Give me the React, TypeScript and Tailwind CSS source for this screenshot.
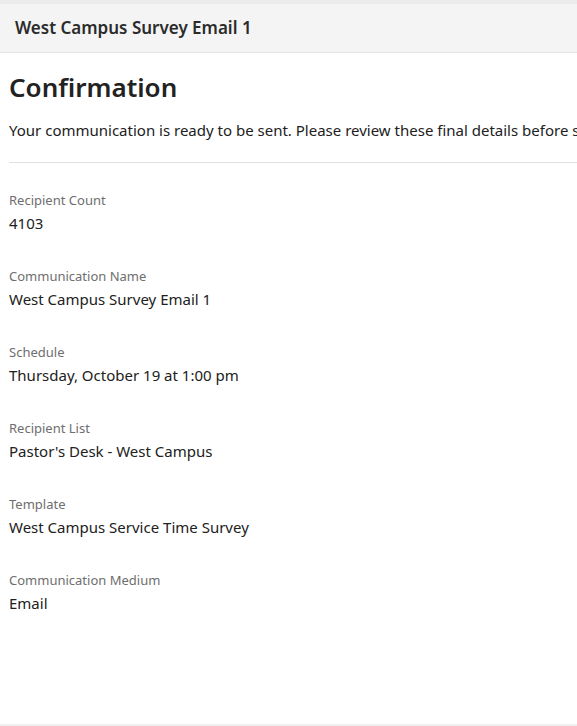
import React from "react";

const items = [
  { label: "Recipient Count", value: "4103" },
  { label: "Communication Name", value: "West Campus Survey Email 1" },
  { label: "Schedule", value: "Thursday, October 19 at 1:00 pm" },
  { label: "Recipient List", value: "Pastor's Desk - West Campus" },
  { label: "Template", value: "West Campus Service Time Survey" },
  { label: "Communication Medium", value: "Email" },
];

export default function App() {
  return (
    <div
      className="w-[577px] h-[726px] overflow-hidden bg-white flex flex-col text-[#212121]"
      style={{ fontFamily: '"Noto Sans", "Open Sans", sans-serif' }}
    >
      <div className="h-[4px] bg-[#ececec] shrink-0" />
      <div className="h-[49px] shrink-0 bg-[#f4f4f4] border-b border-[#e3e3e3] flex items-center px-[15px]">
        <span className="text-[17px] font-semibold text-[#2b2b2b] whitespace-nowrap">West Campus Survey Email 1</span>
      </div>
      <div className="flex-1 px-[9px] overflow-hidden">
        <h1 className="mt-[16px] text-[26px] leading-[36px] font-semibold text-[#222]">Confirmation</h1>
        <p className="mt-[14px] text-[15px] leading-[22px] whitespace-nowrap">
          Your communication is ready to be sent. Please review these final details before sending.
        </p>
        <div className="mt-[21px] h-px bg-[#e0e0e0] -mr-[9px]" />
        <div className="pt-[28px] flex flex-col gap-[34px]">
          {items.map((it) => (
            <div key={it.label} className="flex flex-col">
              <span className="text-[13px] leading-[18px] text-[#6e6e6e]">{it.label}</span>
              <span className="mt-[4px] text-[15px] leading-[20px]">{it.value}</span>
            </div>
          ))}
        </div>
      </div>
      <div className="h-[2px] bg-[#efefef] shrink-0" />
    </div>
  );
}
